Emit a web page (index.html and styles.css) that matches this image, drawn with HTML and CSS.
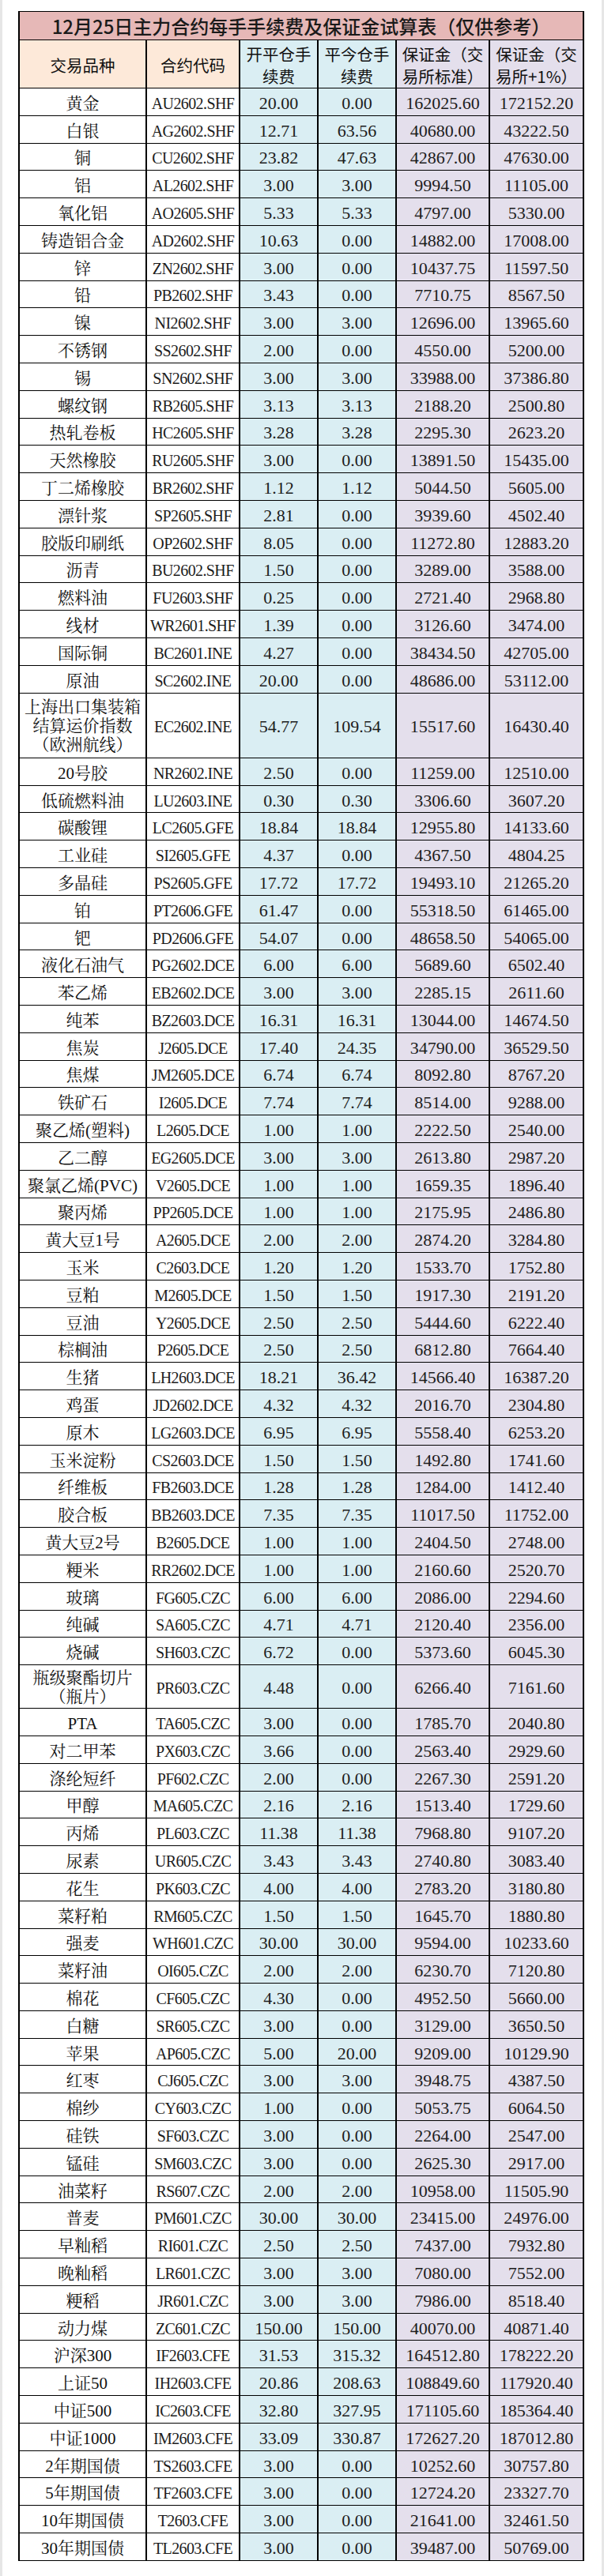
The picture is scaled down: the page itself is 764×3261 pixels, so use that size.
FILE: index.html
```html
<!DOCTYPE html>
<html lang="zh-CN">
<head>
<meta charset="utf-8">
<title>12月25日主力合约每手手续费及保证金试算表</title>
<link rel="stylesheet" href="styles.css">
</head>
<body>
<table class="sheet">
<colgroup>
<col class="c-name"><col class="c-code"><col class="c-fee"><col class="c-fee"><col class="c-mar"><col class="c-mar2">
</colgroup>
<thead>
<tr class="title-row"><th colspan="6">12月25日主力合约每手手续费及保证金试算表（仅供参考）</th></tr>
<tr class="head-row">
<th>交易品种</th><th>合约代码</th><th>开平仓手<br>续费</th><th>平今仓手<br>续费</th><th>保证金（交<br>易所标准）</th><th>保证金（交<br>易所+1%）</th>
</tr>
</thead>
<tbody>
<tr><td>黄金</td><td>AU2602.SHF</td><td>20.00</td><td>0.00</td><td>162025.60</td><td>172152.20</td></tr>
<tr><td>白银</td><td>AG2602.SHF</td><td>12.71</td><td>63.56</td><td>40680.00</td><td>43222.50</td></tr>
<tr><td>铜</td><td>CU2602.SHF</td><td>23.82</td><td>47.63</td><td>42867.00</td><td>47630.00</td></tr>
<tr><td>铝</td><td>AL2602.SHF</td><td>3.00</td><td>3.00</td><td>9994.50</td><td>11105.00</td></tr>
<tr><td>氧化铝</td><td>AO2605.SHF</td><td>5.33</td><td>5.33</td><td>4797.00</td><td>5330.00</td></tr>
<tr><td>铸造铝合金</td><td>AD2602.SHF</td><td>10.63</td><td>0.00</td><td>14882.00</td><td>17008.00</td></tr>
<tr><td>锌</td><td>ZN2602.SHF</td><td>3.00</td><td>0.00</td><td>10437.75</td><td>11597.50</td></tr>
<tr><td>铅</td><td>PB2602.SHF</td><td>3.43</td><td>0.00</td><td>7710.75</td><td>8567.50</td></tr>
<tr><td>镍</td><td>NI2602.SHF</td><td>3.00</td><td>3.00</td><td>12696.00</td><td>13965.60</td></tr>
<tr><td>不锈钢</td><td>SS2602.SHF</td><td>2.00</td><td>0.00</td><td>4550.00</td><td>5200.00</td></tr>
<tr><td>锡</td><td>SN2602.SHF</td><td>3.00</td><td>3.00</td><td>33988.00</td><td>37386.80</td></tr>
<tr><td>螺纹钢</td><td>RB2605.SHF</td><td>3.13</td><td>3.13</td><td>2188.20</td><td>2500.80</td></tr>
<tr><td>热轧卷板</td><td>HC2605.SHF</td><td>3.28</td><td>3.28</td><td>2295.30</td><td>2623.20</td></tr>
<tr><td>天然橡胶</td><td>RU2605.SHF</td><td>3.00</td><td>0.00</td><td>13891.50</td><td>15435.00</td></tr>
<tr><td>丁二烯橡胶</td><td>BR2602.SHF</td><td>1.12</td><td>1.12</td><td>5044.50</td><td>5605.00</td></tr>
<tr><td>漂针浆</td><td>SP2605.SHF</td><td>2.81</td><td>0.00</td><td>3939.60</td><td>4502.40</td></tr>
<tr><td>胶版印刷纸</td><td>OP2602.SHF</td><td>8.05</td><td>0.00</td><td>11272.80</td><td>12883.20</td></tr>
<tr><td>沥青</td><td>BU2602.SHF</td><td>1.50</td><td>0.00</td><td>3289.00</td><td>3588.00</td></tr>
<tr><td>燃料油</td><td>FU2603.SHF</td><td>0.25</td><td>0.00</td><td>2721.40</td><td>2968.80</td></tr>
<tr><td>线材</td><td>WR2601.SHF</td><td>1.39</td><td>0.00</td><td>3126.60</td><td>3474.00</td></tr>
<tr><td>国际铜</td><td>BC2601.INE</td><td>4.27</td><td>0.00</td><td>38434.50</td><td>42705.00</td></tr>
<tr><td>原油</td><td>SC2602.INE</td><td>20.00</td><td>0.00</td><td>48686.00</td><td>53112.00</td></tr>
<tr class="tall3"><td class="multi">上海出口集装箱<br>结算运价指数<br>（欧洲航线）</td><td>EC2602.INE</td><td>54.77</td><td>109.54</td><td>15517.60</td><td>16430.40</td></tr>
<tr><td>20号胶</td><td>NR2602.INE</td><td>2.50</td><td>0.00</td><td>11259.00</td><td>12510.00</td></tr>
<tr><td>低硫燃料油</td><td>LU2603.INE</td><td>0.30</td><td>0.30</td><td>3306.60</td><td>3607.20</td></tr>
<tr><td>碳酸锂</td><td>LC2605.GFE</td><td>18.84</td><td>18.84</td><td>12955.80</td><td>14133.60</td></tr>
<tr><td>工业硅</td><td>SI2605.GFE</td><td>4.37</td><td>0.00</td><td>4367.50</td><td>4804.25</td></tr>
<tr><td>多晶硅</td><td>PS2605.GFE</td><td>17.72</td><td>17.72</td><td>19493.10</td><td>21265.20</td></tr>
<tr><td>铂</td><td>PT2606.GFE</td><td>61.47</td><td>0.00</td><td>55318.50</td><td>61465.00</td></tr>
<tr><td>钯</td><td>PD2606.GFE</td><td>54.07</td><td>0.00</td><td>48658.50</td><td>54065.00</td></tr>
<tr><td>液化石油气</td><td>PG2602.DCE</td><td>6.00</td><td>6.00</td><td>5689.60</td><td>6502.40</td></tr>
<tr><td>苯乙烯</td><td>EB2602.DCE</td><td>3.00</td><td>3.00</td><td>2285.15</td><td>2611.60</td></tr>
<tr><td>纯苯</td><td>BZ2603.DCE</td><td>16.31</td><td>16.31</td><td>13044.00</td><td>14674.50</td></tr>
<tr><td>焦炭</td><td>J2605.DCE</td><td>17.40</td><td>24.35</td><td>34790.00</td><td>36529.50</td></tr>
<tr><td>焦煤</td><td>JM2605.DCE</td><td>6.74</td><td>6.74</td><td>8092.80</td><td>8767.20</td></tr>
<tr><td>铁矿石</td><td>I2605.DCE</td><td>7.74</td><td>7.74</td><td>8514.00</td><td>9288.00</td></tr>
<tr><td>聚乙烯(塑料)</td><td>L2605.DCE</td><td>1.00</td><td>1.00</td><td>2222.50</td><td>2540.00</td></tr>
<tr><td>乙二醇</td><td>EG2605.DCE</td><td>3.00</td><td>3.00</td><td>2613.80</td><td>2987.20</td></tr>
<tr><td>聚氯乙烯(PVC)</td><td>V2605.DCE</td><td>1.00</td><td>1.00</td><td>1659.35</td><td>1896.40</td></tr>
<tr><td>聚丙烯</td><td>PP2605.DCE</td><td>1.00</td><td>1.00</td><td>2175.95</td><td>2486.80</td></tr>
<tr><td>黄大豆1号</td><td>A2605.DCE</td><td>2.00</td><td>2.00</td><td>2874.20</td><td>3284.80</td></tr>
<tr><td>玉米</td><td>C2603.DCE</td><td>1.20</td><td>1.20</td><td>1533.70</td><td>1752.80</td></tr>
<tr><td>豆粕</td><td>M2605.DCE</td><td>1.50</td><td>1.50</td><td>1917.30</td><td>2191.20</td></tr>
<tr><td>豆油</td><td>Y2605.DCE</td><td>2.50</td><td>2.50</td><td>5444.60</td><td>6222.40</td></tr>
<tr><td>棕榈油</td><td>P2605.DCE</td><td>2.50</td><td>2.50</td><td>6812.80</td><td>7664.40</td></tr>
<tr><td>生猪</td><td>LH2603.DCE</td><td>18.21</td><td>36.42</td><td>14566.40</td><td>16387.20</td></tr>
<tr><td>鸡蛋</td><td>JD2602.DCE</td><td>4.32</td><td>4.32</td><td>2016.70</td><td>2304.80</td></tr>
<tr><td>原木</td><td>LG2603.DCE</td><td>6.95</td><td>6.95</td><td>5558.40</td><td>6253.20</td></tr>
<tr><td>玉米淀粉</td><td>CS2603.DCE</td><td>1.50</td><td>1.50</td><td>1492.80</td><td>1741.60</td></tr>
<tr><td>纤维板</td><td>FB2603.DCE</td><td>1.28</td><td>1.28</td><td>1284.00</td><td>1412.40</td></tr>
<tr><td>胶合板</td><td>BB2603.DCE</td><td>7.35</td><td>7.35</td><td>11017.50</td><td>11752.00</td></tr>
<tr><td>黄大豆2号</td><td>B2605.DCE</td><td>1.00</td><td>1.00</td><td>2404.50</td><td>2748.00</td></tr>
<tr><td>粳米</td><td>RR2602.DCE</td><td>1.00</td><td>1.00</td><td>2160.60</td><td>2520.70</td></tr>
<tr><td>玻璃</td><td>FG605.CZC</td><td>6.00</td><td>6.00</td><td>2086.00</td><td>2294.60</td></tr>
<tr><td>纯碱</td><td>SA605.CZC</td><td>4.71</td><td>4.71</td><td>2120.40</td><td>2356.00</td></tr>
<tr><td>烧碱</td><td>SH603.CZC</td><td>6.72</td><td>0.00</td><td>5373.60</td><td>6045.30</td></tr>
<tr class="tall2"><td class="multi">瓶级聚酯切片<br>（瓶片）</td><td>PR603.CZC</td><td>4.48</td><td>0.00</td><td>6266.40</td><td>7161.60</td></tr>
<tr><td>PTA</td><td>TA605.CZC</td><td>3.00</td><td>0.00</td><td>1785.70</td><td>2040.80</td></tr>
<tr><td>对二甲苯</td><td>PX603.CZC</td><td>3.66</td><td>0.00</td><td>2563.40</td><td>2929.60</td></tr>
<tr><td>涤纶短纤</td><td>PF602.CZC</td><td>2.00</td><td>0.00</td><td>2267.30</td><td>2591.20</td></tr>
<tr><td>甲醇</td><td>MA605.CZC</td><td>2.16</td><td>2.16</td><td>1513.40</td><td>1729.60</td></tr>
<tr><td>丙烯</td><td>PL603.CZC</td><td>11.38</td><td>11.38</td><td>7968.80</td><td>9107.20</td></tr>
<tr><td>尿素</td><td>UR605.CZC</td><td>3.43</td><td>3.43</td><td>2740.80</td><td>3083.40</td></tr>
<tr><td>花生</td><td>PK603.CZC</td><td>4.00</td><td>4.00</td><td>2783.20</td><td>3180.80</td></tr>
<tr><td>菜籽粕</td><td>RM605.CZC</td><td>1.50</td><td>1.50</td><td>1645.70</td><td>1880.80</td></tr>
<tr><td>强麦</td><td>WH601.CZC</td><td>30.00</td><td>30.00</td><td>9594.00</td><td>10233.60</td></tr>
<tr><td>菜籽油</td><td>OI605.CZC</td><td>2.00</td><td>2.00</td><td>6230.70</td><td>7120.80</td></tr>
<tr><td>棉花</td><td>CF605.CZC</td><td>4.30</td><td>0.00</td><td>4952.50</td><td>5660.00</td></tr>
<tr><td>白糖</td><td>SR605.CZC</td><td>3.00</td><td>0.00</td><td>3129.00</td><td>3650.50</td></tr>
<tr><td>苹果</td><td>AP605.CZC</td><td>5.00</td><td>20.00</td><td>9209.00</td><td>10129.90</td></tr>
<tr><td>红枣</td><td>CJ605.CZC</td><td>3.00</td><td>3.00</td><td>3948.75</td><td>4387.50</td></tr>
<tr><td>棉纱</td><td>CY603.CZC</td><td>1.00</td><td>0.00</td><td>5053.75</td><td>6064.50</td></tr>
<tr><td>硅铁</td><td>SF603.CZC</td><td>3.00</td><td>0.00</td><td>2264.00</td><td>2547.00</td></tr>
<tr><td>锰硅</td><td>SM603.CZC</td><td>3.00</td><td>0.00</td><td>2625.30</td><td>2917.00</td></tr>
<tr><td>油菜籽</td><td>RS607.CZC</td><td>2.00</td><td>2.00</td><td>10958.00</td><td>11505.90</td></tr>
<tr><td>普麦</td><td>PM601.CZC</td><td>30.00</td><td>30.00</td><td>23415.00</td><td>24976.00</td></tr>
<tr><td>早籼稻</td><td>RI601.CZC</td><td>2.50</td><td>2.50</td><td>7437.00</td><td>7932.80</td></tr>
<tr><td>晚籼稻</td><td>LR601.CZC</td><td>3.00</td><td>3.00</td><td>7080.00</td><td>7552.00</td></tr>
<tr><td>粳稻</td><td>JR601.CZC</td><td>3.00</td><td>3.00</td><td>7986.00</td><td>8518.40</td></tr>
<tr><td>动力煤</td><td>ZC601.CZC</td><td>150.00</td><td>150.00</td><td>40070.00</td><td>40871.40</td></tr>
<tr><td>沪深300</td><td>IF2603.CFE</td><td>31.53</td><td>315.32</td><td>164512.80</td><td>178222.20</td></tr>
<tr><td>上证50</td><td>IH2603.CFE</td><td>20.86</td><td>208.63</td><td>108849.60</td><td>117920.40</td></tr>
<tr><td>中证500</td><td>IC2603.CFE</td><td>32.80</td><td>327.95</td><td>171105.60</td><td>185364.40</td></tr>
<tr><td>中证1000</td><td>IM2603.CFE</td><td>33.09</td><td>330.87</td><td>172627.20</td><td>187012.80</td></tr>
<tr><td>2年期国债</td><td>TS2603.CFE</td><td>3.00</td><td>0.00</td><td>10252.60</td><td>30757.80</td></tr>
<tr><td>5年期国债</td><td>TF2603.CFE</td><td>3.00</td><td>0.00</td><td>12724.20</td><td>23327.70</td></tr>
<tr><td>10年期国债</td><td>T2603.CFE</td><td>3.00</td><td>0.00</td><td>21641.00</td><td>32461.50</td></tr>
<tr><td>30年期国债</td><td>TL2603.CFE</td><td>3.00</td><td>0.00</td><td>39487.00</td><td>50769.00</td></tr>
</tbody>
</table>
</body>
</html>
```
FILE: styles.css
```css
html, body {
  margin: 0;
  padding: 0;
  background: #ffffff;
}

body {
  box-sizing: border-box;
  width: 764px;
  min-height: 3261px;
  border-left: 3px solid #e6e6e6;
  border-right: 3px solid #e6e6e6;
  padding: 14px 0 0 20px;
  font-family: "Liberation Serif", "Noto Serif CJK SC", "Noto Sans CJK SC", serif;
  color: #1c1c1c;
}

.sheet {
  border-collapse: collapse;
  table-layout: fixed;
  width: 714px;
}

.c-name { width: 161px; }
.c-code { width: 118px; }
.c-fee { width: 99px; }
.c-mar { width: 118px; }
.c-mar2 { width: 119px; }

.sheet th,
.sheet td {
  border-top: 1px solid #000;
  border-bottom: 1px solid #000;
  border-left: 2px solid #000;
  border-right: 2px solid #000;
  text-align: center;
  vertical-align: middle;
  padding: 0;
  white-space: nowrap;
  overflow: hidden;
}

.title-row th {
  height: 34px;
  background: #e6b8b7;
  font-family: "Noto Sans CJK SC", sans-serif;
  font-weight: 500;
  font-size: 24px;
  line-height: 30px;
  color: #1a1a1a;
  padding-top: 1px;
}

.head-row th {
  height: 58px;
  font-family: "Noto Sans CJK SC", sans-serif;
  font-weight: 400;
  font-size: 20.5px;
  line-height: 28px;
  color: #111;
  padding-top: 2px;
}

.head-row th:nth-child(1),
.head-row th:nth-child(2) { background: #fde9d9; }
.head-row th:nth-child(3),
.head-row th:nth-child(4) { background: #daeef3; }
.head-row th:nth-child(5),
.head-row th:nth-child(6) { background: #e4dfec; }

.sheet tbody tr { height: 34.8px; }
.sheet tbody tr.tall3 { height: 82.3px; }
.sheet tbody tr.tall2 { height: 55px; }

.sheet td {
  font-size: 22px;
  line-height: 24px;
  padding-top: 4px;
  letter-spacing: 0;
}

.sheet td:nth-child(1) {
  color: #111;
  font-size: 21px;
}

.sheet td:nth-child(2) {
  font-size: 20px;
  letter-spacing: -0.6px;
}

.sheet td:nth-child(3),
.sheet td:nth-child(4) { background: #daeef3; }
.sheet td:nth-child(5),
.sheet td:nth-child(6) { background: #e4dfec; }

.sheet td.multi {
  line-height: 24px;
  padding-top: 2px;
}
```
